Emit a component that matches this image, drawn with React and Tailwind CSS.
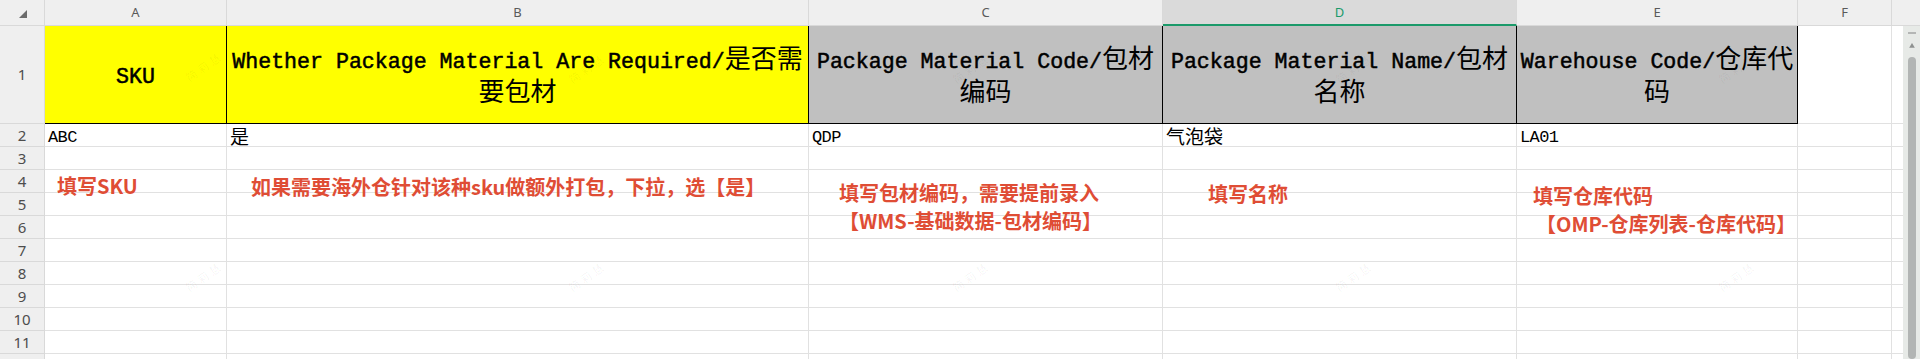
import React from 'react';

const mono = "font-['Liberation_Mono','Noto_Sans_CJK_SC',monospace]";
const cjk = "font-['Noto_Sans_CJK_SC',sans-serif]";

function Cjk({ children, size = 'text-[26px] leading-none [-webkit-text-stroke:0px]' }) {
  return <span className={`${cjk} ${size}`}>{children}</span>;
}

function ColumnHeader() {
  return (
    <div className="flex h-[26px] bg-[#efefef] text-[13px] text-[#5a5a5a] font-['Noto_Sans',sans-serif]">
      <div className="relative w-[45px] border-r border-b border-[#d9d9d9]">
        <svg className="absolute left-[19px] top-[10px]" width="8" height="8" viewBox="0 0 8 8">
          <polygon points="8,0 8,8 0,8" fill="#6b6b6b" />
        </svg>
      </div>
      <div className="flex w-[182px] items-center justify-center border-r border-b border-[#d9d9d9]">A</div>
      <div className="flex w-[582px] items-center justify-center border-r border-b border-[#d9d9d9]">B</div>
      <div className="flex w-[354px] items-center justify-center border-r border-b border-[#d9d9d9]">C</div>
      <div className="flex w-[354px] items-center justify-center border-r border-r-[#d9d9d9] border-b-2 border-b-[#1b9a6a] bg-[#dadada] pt-[1px] text-[#1b9a6a]">D</div>
      <div className="flex w-[281px] items-center justify-center border-r border-b border-[#d9d9d9]">E</div>
      <div className="flex w-[94px] items-center justify-center border-r border-b border-[#d9d9d9]">F</div>
      <div className="flex-1 border-b border-[#d9d9d9]" />
    </div>
  );
}

function RowNum({ n, className = 'h-[23px]' }) {
  return (
    <div className={`flex w-[45px] shrink-0 items-center justify-center border-r border-b border-[#d9d9d9] bg-[#efefef] text-[15px] text-[#4d4d4d] font-['Noto_Sans',sans-serif] ${className}`}>
      {n}
    </div>
  );
}

function TitleCell({ width, bg, children }) {
  return (
    <div className={`flex ${width} ${bg} flex-col items-center justify-center border-r border-b border-black pt-[5px] text-[21.6px] text-black [-webkit-text-stroke:0.5px_black] ${mono}`}>
      {children}
    </div>
  );
}

function Line({ children }) {
  return <div className="h-[33px] whitespace-nowrap leading-[33px]">{children}</div>;
}

function TitleRow() {
  return (
    <div className="flex h-[98px]">
      <RowNum n={1} className="h-[98px]" />
      <TitleCell width="w-[182px]" bg="bg-[#ffff00]">
        <Line>SKU</Line>
      </TitleCell>
      <TitleCell width="w-[582px]" bg="bg-[#ffff00]">
        <Line>Whether Package Material Are Required/<Cjk>是否需</Cjk></Line>
        <Line><Cjk>要包材</Cjk></Line>
      </TitleCell>
      <TitleCell width="w-[354px]" bg="bg-[#c0c0c0]">
        <Line>Package Material Code/<Cjk>包材</Cjk></Line>
        <Line><Cjk>编码</Cjk></Line>
      </TitleCell>
      <TitleCell width="w-[354px]" bg="bg-[#c0c0c0]">
        <Line>Package Material Name/<Cjk>包材</Cjk></Line>
        <Line><Cjk>名称</Cjk></Line>
      </TitleCell>
      <TitleCell width="w-[281px]" bg="bg-[#c0c0c0]">
        <Line>Warehouse Code/<Cjk>仓库代</Cjk></Line>
        <Line><Cjk>码</Cjk></Line>
      </TitleCell>
      <div className="w-[94px] border-r border-b border-[#e1e1e1]" />
      <div className="flex-1 border-b border-[#e1e1e1]" />
    </div>
  );
}

function Cell({ width, children }) {
  return (
    <div className={`${width} whitespace-nowrap border-r border-b border-[#e1e1e1] pl-[3px] pt-[2px] leading-[20px] text-black`}>
      {children}
    </div>
  );
}

function DataRow({ n, values = [] }) {
  const [a, b, c, d, e] = values;
  return (
    <div className="flex h-[23px]">
      <RowNum n={n} />
      <Cell width="w-[182px]">{a}</Cell>
      <Cell width="w-[582px]">{b}</Cell>
      <Cell width="w-[354px]">{c}</Cell>
      <Cell width="w-[354px]">{d}</Cell>
      <Cell width="w-[281px]">{e}</Cell>
      <Cell width="w-[94px]" />
      <div className="flex-1 border-b border-[#e1e1e1]" />
    </div>
  );
}

function Scrollbar() {
  return (
    <div className="flex h-[333px] w-[17px] flex-col bg-[#e7eae7]">
      <div className="ml-[5px] mt-[6px] h-[2px] w-[8px] bg-[#b4b6b5]" />
      <svg className="ml-[6px] mt-[9px]" width="6" height="5" viewBox="0 0 6 5">
        <polygon points="3,0 6,5 0,5" fill="#8e9190" />
      </svg>
      <div className="ml-[5px] mt-[9px] h-[320px] w-[8px] rounded-full bg-[#b2b5b4]" />
    </div>
  );
}

const notes = "absolute whitespace-nowrap text-[20px] font-bold text-[#df4d35] " + cjk;

function Notes() {
  return (
    <>
      <div className={`${notes} left-[57px] top-[176px] leading-[20px]`}>填写SKU</div>
      <div className={`${notes} left-[251px] top-[177px] leading-[20px]`}>
        如果需要海外仓针对该种sku做额外打包，下拉，选【是】
      </div>
      <div className={`${notes} left-[839px] top-[179px] leading-[28px]`}>
        <div>填写包材编码，需要提前录入</div>
        <div>【WMS-基础数据-包材编码】</div>
      </div>
      <div className={`${notes} left-[1208px] top-[184px] leading-[20px]`}>填写名称</div>
      <div className={`${notes} left-[1533px] top-[182px] leading-[28px]`}>
        <div>填写仓库代码</div>
        <div className="pl-[3px]">【OMP-仓库列表-仓库代码】</div>
      </div>
    </>
  );
}

// faint tiled name stamp over the sheet
const marks = [
  [183, 58], [566, 60], [950, 60], [1333, 60], [1716, 60],
  [183, 268], [566, 268], [950, 268], [1333, 268], [1716, 268],
];

function Watermarks() {
  return marks.map(([x, y]) => (
    <div
      key={`${x}-${y}`}
      className={`pointer-events-none absolute -rotate-[35deg] text-[11px] tracking-[3px] text-black/[0.05] ${cjk}`}
      style={{ left: x, top: y }}
    >
      简莉慧
    </div>
  ));
}

const value = `${mono} text-[17px] tracking-[-0.6px]`;

export default function App() {
  const rows = [3, 4, 5, 6, 7, 8, 9, 10, 11, 12];
  return (
    <div className="relative h-[359px] w-[1920px] overflow-hidden bg-white">
      <ColumnHeader />
      <div className="flex">
        <div className="w-[1903px]">
          <TitleRow />
          <DataRow
            n={2}
            values={[
              <span className={value}>ABC</span>,
              <Cjk size="text-[19px] leading-none">是</Cjk>,
              <span className={value}>QDP</span>,
              <Cjk size="text-[19px] leading-none">气泡袋</Cjk>,
              <span className={value}>LA01</span>,
            ]}
          />
          {rows.map((n) => (
            <DataRow key={n} n={n} />
          ))}
        </div>
        <Scrollbar />
      </div>
      <Notes />
      <Watermarks />
    </div>
  );
}
